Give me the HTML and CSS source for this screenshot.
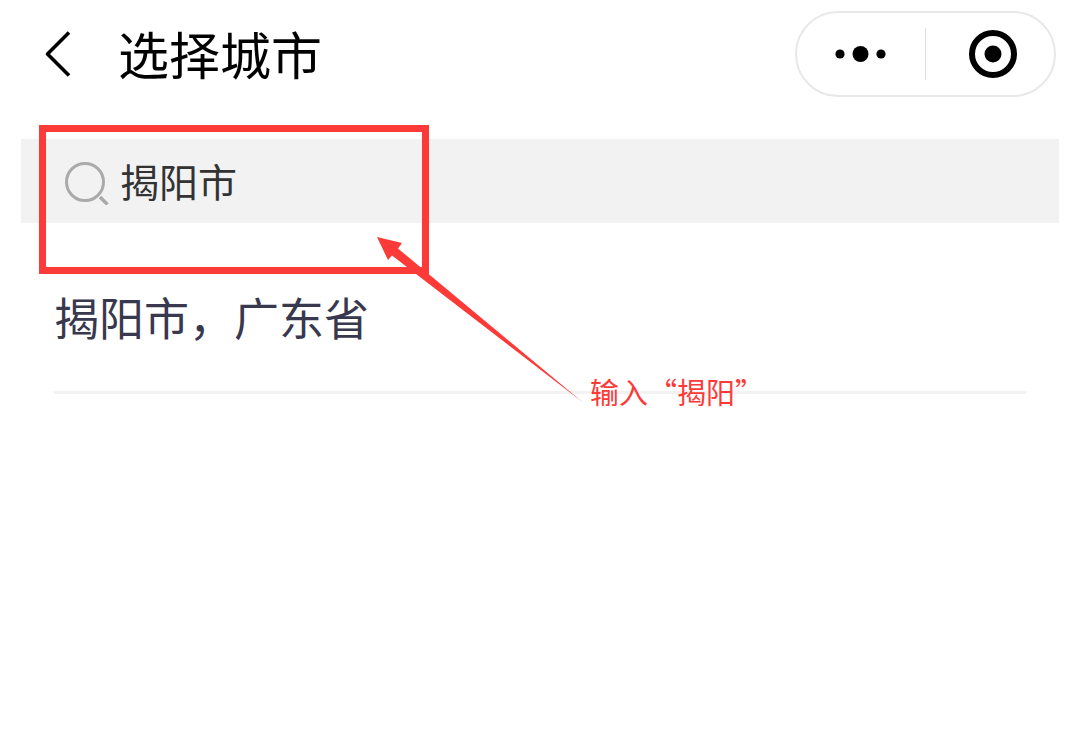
FILE: index.html
```html
<!DOCTYPE html>
<html lang="zh-CN">
<head>
<meta charset="utf-8">
<meta name="viewport" content="width=device-width, initial-scale=1">
<title>选择城市</title>
<link rel="stylesheet" href="styles.css">
</head>
<body>
<header class="navbar">
  <button class="back" type="button" aria-label="返回">
    <svg width="28" height="46" viewBox="0 0 28 46" fill="none" stroke="#000" stroke-width="3.6" stroke-linejoin="round"><path d="M25 1.5 3.5 23 25 44.500"/></svg>
  </button>
  <h1 class="title">选择城市</h1>
  <div class="capsule">
    <button class="capsule-button" type="button" aria-label="更多">
      <svg width="52" height="18" viewBox="0 0 52 18"><circle cx="5" cy="9" r="4.600"/><circle cx="25.500" cy="9" r="8"/><circle cx="46" cy="9" r="4.600"/></svg>
    </button>
    <button class="capsule-button capsule-close" type="button" aria-label="关闭">
      <svg width="48" height="48" viewBox="0 0 48 48"><circle cx="24" cy="24" r="21" fill="none" stroke="#000" stroke-width="6"/><circle cx="24" cy="24" r="8.500"/></svg>
    </button>
  </div>
</header>
<main class="content">
  <label class="search">
    <svg class="search-icon" width="46" height="48" viewBox="0 0 46 48" fill="none" stroke="#aaa" stroke-width="3"><circle cx="21" cy="25" r="18.500"/><path d="m36 40 7.500 7.500" stroke-width="3.500"/></svg>
    <input class="search-input" type="text" value="揭阳市" aria-label="搜索城市">
  </label>
  <ul class="results">
    <li class="result"><a class="result-link" href="#">揭阳市，广东省</a></li>
  </ul>
</main>
<div class="highlight"></div>
<svg class="arrow" width="210" height="170" viewBox="0 0 210 170" fill="#fc3a38"><path d="M2 2 27 8l-4 5.500L208 167.500 17 20.500l-4 4.500z"/></svg>
<p class="note">输入“揭阳”</p>
</body>
</html>
```
FILE: styles.css
```css
* { box-sizing: border-box; }
body {
  margin: 0;
  position: relative;
  min-height: 100vh;
  background: #fff;
  color: #000;
  font-family: "Noto Sans CJK SC", sans-serif;
}
button { padding: 0; border: 0; background: none; }
svg { display: block; }
.navbar {
  display: flex;
  align-items: center;
  height: 108px;
  padding: 0 24px 0 44px;
}
.back { width: 28px; }
.title {
  margin: 0 auto 0 46px;
  padding-bottom: 2px;
  font-size: 51px;
  line-height: 60px;
  font-weight: 400;
}
.capsule {
  display: flex;
  width: 261px;
  height: 86px;
  border: 2px solid #e8e8e8;
  border-radius: 43px;
}
.capsule-button {
  display: flex;
  width: 50%;
  align-items: center;
  justify-content: center;
}
.capsule-close {
  position: relative;
  padding-left: 6px;
}
.capsule-close::before {
  content: "";
  position: absolute;
  left: -1px;
  top: 15px;
  bottom: 15px;
  width: 1px;
  background: #ddd;
}
.content { padding: 31px 21px 0; }
.search {
  display: flex;
  align-items: center;
  gap: 10px;
  height: 84px;
  padding: 0 43px;
  background: #f2f2f2;
}
.search-input {
  flex: 1;
  min-width: 0;
  padding: 0 0 3px;
  border: 0;
  outline: 0;
  background: none;
  color: #333;
  font: inherit;
  font-size: 39px;
}
.results { margin: 0; padding: 0 33px; list-style: none; }
.result { padding: 62px 0 42px; border-bottom: 3px solid #f2f2f2; }
.result-link {
  display: block;
  color: #38384e;
  font-size: 45px;
  line-height: 64px;
  text-decoration: none;
}
.highlight {
  position: absolute;
  left: 39px;
  top: 125px;
  width: 390px;
  height: 149px;
  border: 7px solid #fc3a38;
  pointer-events: none;
}
.arrow { position: absolute; left: 375px; top: 235px; pointer-events: none; }
.note {
  position: absolute;
  left: 590px;
  top: 371px;
  margin: 0;
  color: #fc3a38;
  font-size: 29px;
  line-height: 40px;
}
```
